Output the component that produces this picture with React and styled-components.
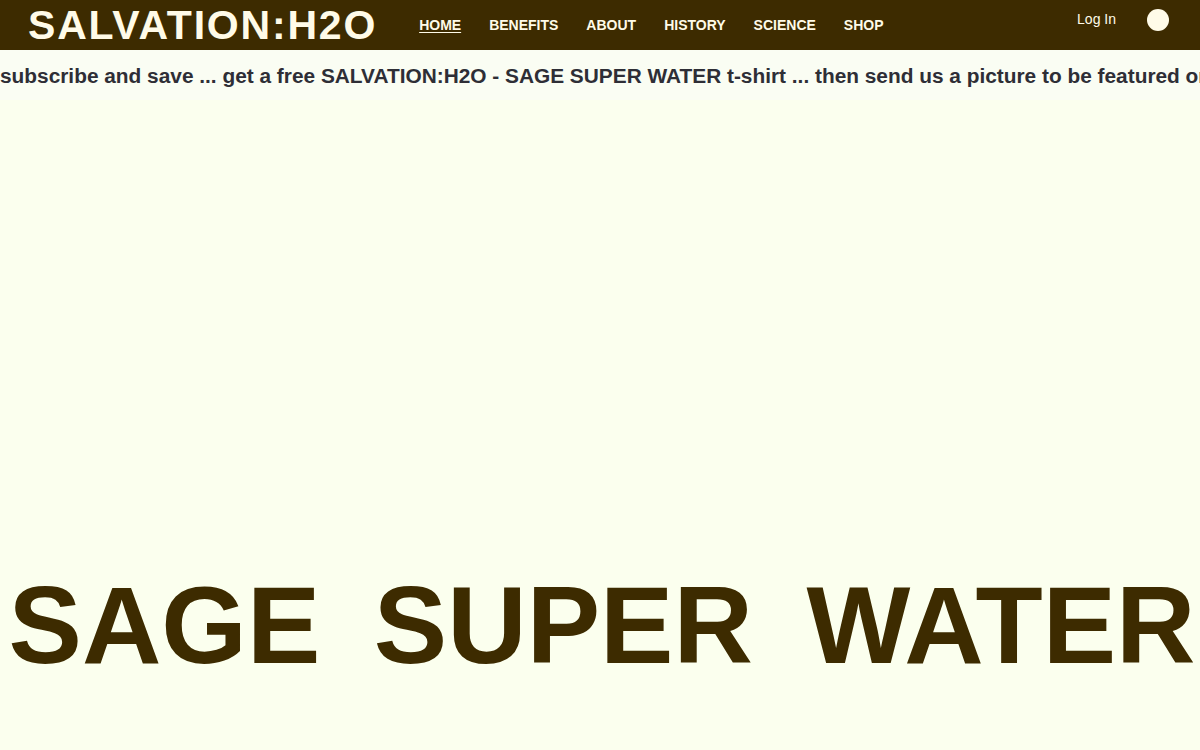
import React from 'react';
import styled, { createGlobalStyle } from 'styled-components';

const Global = createGlobalStyle`
  html, body {
    margin: 0;
    padding: 0;
    background: #fbffee;
    font-family: "Liberation Sans", Arial, sans-serif;
  }
  * { box-sizing: border-box; }
`;

const Page = styled.div`
  width: 1200px;
  height: 750px;
  overflow: hidden;
  display: flex;
  flex-direction: column;
  background: #fbffee;
`;

const Header = styled.header`
  height: 50px;
  background: #3d2b00;
  display: flex;
  align-items: center;
  padding: 0 0 0 28px;
`;

const Logo = styled.div`
  font-size: 41px;
  font-weight: 700;
  color: #fffbe8;
  letter-spacing: 1.8px;
  line-height: 50px;
  margin-right: 42px;
`;

const Nav = styled.nav`
  display: flex;
  gap: 28px;
  flex: 1;
`;

const NavLink = styled.a`
  font-size: 14px;
  font-weight: 700;
  color: #fffbe8;
  text-decoration: ${p => (p.$active ? 'underline' : 'none')};
  text-underline-offset: 2px;
  margin-top: -1px;
`;

const LogIn = styled.a`
  font-size: 14px;
  color: #fffbe8;
  margin-top: -12px;
  margin-right: 31px;
`;

const Avatar = styled.div`
  width: 22px;
  height: 22px;
  border-radius: 50%;
  background: #fffbe8;
  margin-top: -10px;
  margin-right: 31px;
`;

const Ticker = styled.div`
  height: 50px;
  background: #fafdf3;
  white-space: nowrap;
  overflow: hidden;
  font-size: 20.85px;
  font-weight: 700;
  color: #2e2e36;
  padding-top: 14px;
`;

const Hero = styled.main`
  flex: 1;
  display: flex;
  align-items: flex-end;
  justify-content: center;
  padding: 0 0 70px 4px;
`;

const Headline = styled.h1`
  margin: 0;
  font-size: 110px;
  font-weight: 700;
  color: #3d2b00;
  line-height: 1;
  word-spacing: 23px;
  white-space: nowrap;
`;

export default function App() {
  const links = ['HOME', 'BENEFITS', 'ABOUT', 'HISTORY', 'SCIENCE', 'SHOP'];
  return (
    <Page>
      <Global />
      <Header>
        <Logo>SALVATION:H2O</Logo>
        <Nav>
          {links.map((l, i) => (
            <NavLink key={l} $active={i === 0}>{l}</NavLink>
          ))}
        </Nav>
        <LogIn>Log In</LogIn>
        <Avatar />
      </Header>
      <Ticker>
        subscribe and save ... get a free SALVATION:H2O - SAGE SUPER WATER t-shirt ... then send us a picture to be featured on our site
      </Ticker>
      <Hero>
        <Headline>SAGE SUPER WATER</Headline>
      </Hero>
    </Page>
  );
}
